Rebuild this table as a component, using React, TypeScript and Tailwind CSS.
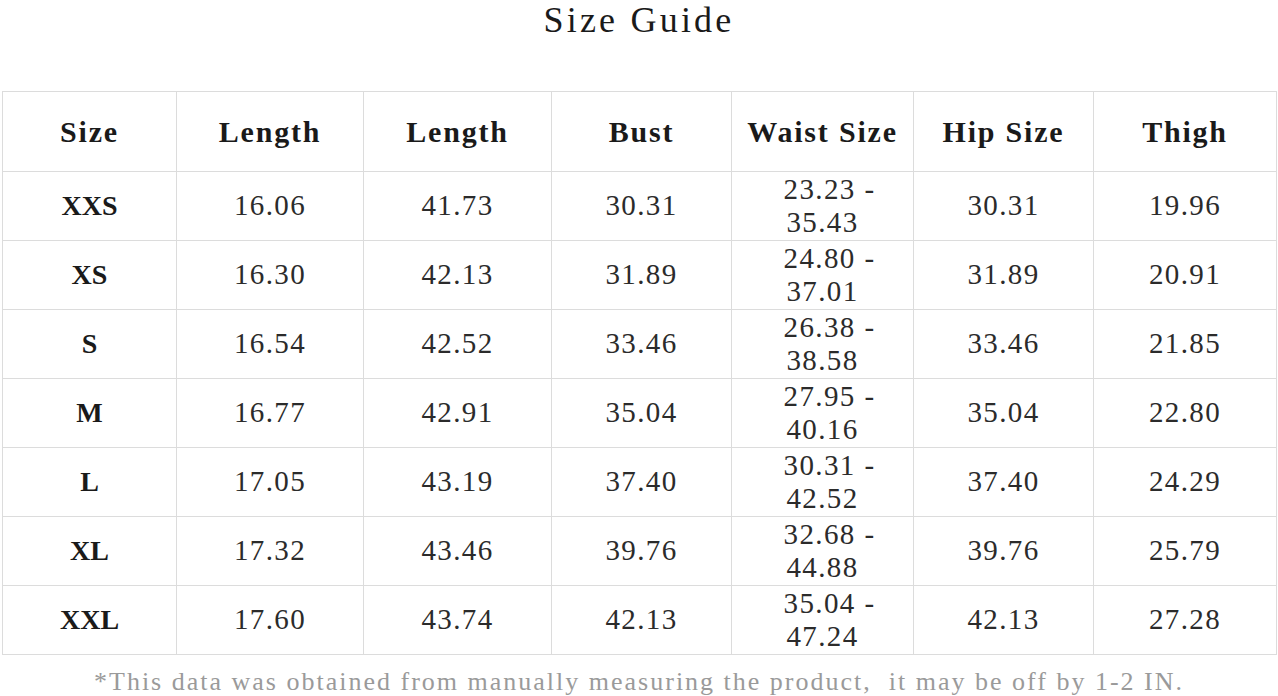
const cols = ["Size", "Length", "Length", "Bust", "Waist Size", "Hip Size", "Thigh"];
const widths = ["w-[174px]", "w-[187px]", "w-[188px]", "w-[180px]", "w-[182px]", "w-[180px]", "w-[183px]"];

const rows = [
  ["XXS", "16.06", "41.73", "30.31", ["23.23 -", "35.43"], "30.31", "19.96"],
  ["XS", "16.30", "42.13", "31.89", ["24.80 -", "37.01"], "31.89", "20.91"],
  ["S", "16.54", "42.52", "33.46", ["26.38 -", "38.58"], "33.46", "21.85"],
  ["M", "16.77", "42.91", "35.04", ["27.95 -", "40.16"], "35.04", "22.80"],
  ["L", "17.05", "43.19", "37.40", ["30.31 -", "42.52"], "37.40", "24.29"],
  ["XL", "17.32", "43.46", "39.76", ["32.68 -", "44.88"], "39.76", "25.79"],
  ["XXL", "17.60", "43.74", "42.13", ["35.04 -", "47.24"], "42.13", "27.28"],
] as const;

export default function App() {
  return (
    <div className="w-[1278px] h-[696px] overflow-hidden bg-white font-['Liberation_Serif','Times_New_Roman',serif]">
      {/* title */}
      <h1 className="h-[91px] pt-[2px] text-center text-[36px] leading-[36px] tracking-[3.2px] text-[#1a1a1a]">
        Size Guide
      </h1>

      {/* table */}
      <table className="ml-[2px] w-[1274px] table-fixed border-collapse">
        <thead>
          <tr className="h-[80px]">
            {cols.map((c, i) => (
              <th
                key={i}
                className={`${widths[i]} border border-[#dcdcdc] text-center align-middle text-[30px] font-bold tracking-[1.8px] text-[#1a1a1a]`}
              >
                {c}
              </th>
            ))}
          </tr>
        </thead>
        <tbody>
          {rows.map((r, ri) => (
            <tr key={ri} className="h-[69px]">
              {r.map((v, ci) => (
                <td
                  key={ci}
                  className={`border border-[#dcdcdc] text-center align-middle ${
                    ci === 0
                      ? "text-[28px] font-bold tracking-[0px] text-[#1a1a1a]"
                      : "text-[29px] tracking-[1.4px] text-[#2b2b2b]"
                  }`}
                >
                  {Array.isArray(v) ? (
                    <div className="flex flex-col items-center leading-[33px]">
                      <span className="pl-[14px]">{v[0]}</span>
                      <span>{v[1]}</span>
                    </div>
                  ) : (
                    v
                  )}
                </td>
              ))}
            </tr>
          ))}
        </tbody>
      </table>

      {/* note */}
      <p className="mt-[13px] text-center text-[26px] leading-[28px] tracking-[2px] text-[#9a9a9a] whitespace-nowrap">
        *This data was obtained from manually measuring the product,&nbsp; it may be off by 1-2 IN.
      </p>
    </div>
  );
}
